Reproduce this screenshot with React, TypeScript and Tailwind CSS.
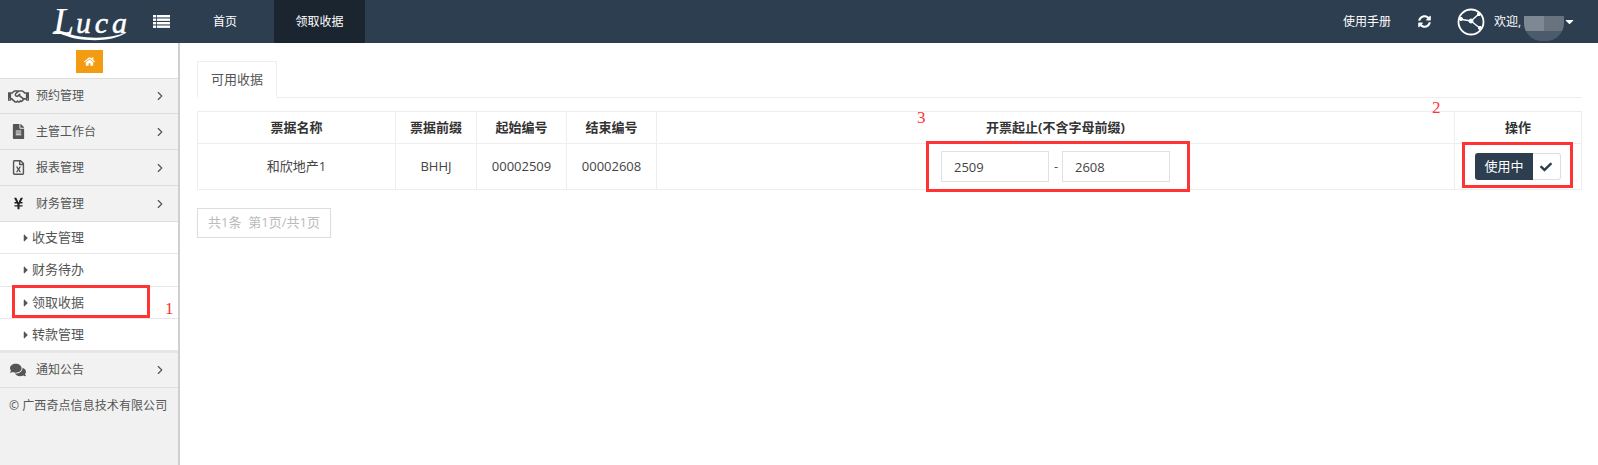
import { FaCaretDown, FaCaretRight, FaCheck, FaComments, FaFileAlt, FaHome, FaRegFileExcel, FaRegHandshake, FaSyncAlt, FaYenSign } from "react-icons/fa";
import { LuChevronRight } from "react-icons/lu";
import type { ReactNode } from "react";

const font = { fontFamily: '"Open Sans", "Noto Sans CJK SC", sans-serif' };

function MenuRow({ icon, label, h = "h-[35px]" }: { icon: ReactNode; label: string; h?: string }) {
  return (
    <div className={`flex ${h} items-center border-b border-[#dedede] bg-[#f2f2f2] pr-[11px] text-[12px] text-[#555]`}>
      <span className="flex w-[36px] shrink-0 justify-center text-[#555]">{icon}</span>
      <span className="flex-1">{label}</span>
      <LuChevronRight className="text-[14px]" />
    </div>
  );
}

function SubRow({ label, h = "h-[32px]" }: { label: string; h?: string }) {
  return (
    <div className={`flex ${h} items-center border-b border-[#e6e6e6] bg-white pl-[20px] text-[13px] text-[#555]`}>
      <FaCaretRight className="text-[12px] text-[#555]" />
      {label}
    </div>
  );
}

function Logo() {
  return (
    <svg width="80" height="43" viewBox="0 0 80 43">
      <text x="2" y="34" fill="#fff" fontFamily='"Liberation Serif", serif' fontStyle="italic" fontSize="38">L</text>
      <text x="25" y="33" fill="#fff" stroke="#fff" strokeWidth="0.5" fontFamily='"Liberation Serif", serif' fontStyle="italic" fontSize="30" textLength="51">uca</text>
      <path d="M1 33 C8 27 14 34 26 36 C44 39 62 38 76 32 C62 42 40 41 24 38.5 C14 36.5 8 32 1 33Z" fill="#fff" />
    </svg>
  );
}

function ListIcon() {
  return (
    <svg width="17" height="13" viewBox="0 0 17 13" fill="#fff">
      <rect x="0" y="0" width="17" height="2.4" />
      <rect x="0" y="3.5" width="17" height="2.4" />
      <rect x="0" y="7" width="17" height="2.4" />
      <rect x="0" y="10.5" width="17" height="2.4" />
      <rect x="3" y="0" width="0.8" height="13" fill="#2c3e50" />
    </svg>
  );
}

function Hub() {
  return (
    <svg width="28" height="28" viewBox="0 0 28 28" fill="none" stroke="#fff">
      <circle cx="14" cy="14" r="12.5" strokeWidth="1.8" />
      <path d="M2 11 L14 13 L23 5 M14 13 L24 21" strokeWidth="1.4" />
      <circle cx="14" cy="13" r="2" fill="#fff" />
      <circle cx="4" cy="11" r="1.6" fill="#fff" />
      <circle cx="22" cy="6" r="1.6" fill="#fff" />
      <circle cx="23" cy="20" r="1.6" fill="#fff" />
    </svg>
  );
}

const th = "border border-[#eee] font-bold text-[13px] text-[#333] text-center";
const td = "border border-[#eee] font-normal text-[13px] text-[#444] text-center";

export default function App() {
  return (
    <div className="relative flex h-[465px] w-[1598px] flex-col overflow-hidden bg-white" style={font}>
      <header className="flex h-[43px] shrink-0 items-center bg-[#2c3e50] text-[12px] text-white">
        <div className="ml-[51px] w-[102px]"><Logo /></div>
        <ListIcon />
        <span className="ml-[43px] w-[61px]">首页</span>
        <span className="flex h-full w-[91px] items-center justify-center bg-[#1b2530]">领取收据</span>
        <div className="ml-auto flex items-center pr-[22px]">
          <span>使用手册</span>
          <FaSyncAlt className="ml-[27px] text-[13px]" />
          <span className="ml-[26px]"><Hub /></span>
          <span className="ml-[9px]">欢迎,</span>
          <span className="relative top-[7px] ml-[3px] flex h-[25px] w-[40px] flex-col overflow-hidden rounded-b-[18px]">
            <span className="flex h-[15px]">
              <span className="w-[20px] bg-[#7d8893]" />
              <span className="w-[20px] bg-[#69737f]" />
            </span>
            <span className="h-[10px] bg-[#4b5b6c]" />
          </span>
          <FaCaretDown className="-ml-[1px] text-[13px]" />
        </div>
      </header>

      <div className="flex flex-1">
        <aside className="w-[180px] shrink-0 border-r-2 border-[#cfcfcf] bg-[#f1f1f1]">
          <div className="flex h-[36px] items-center justify-center border-b border-[#dedede] bg-white pt-[1px]">
            <span className="flex h-[23px] w-[27px] items-center justify-center bg-[#f39c12] text-[11px] text-white"><FaHome /></span>
          </div>
          <MenuRow icon={<FaRegHandshake className="text-[21px]" />} label="预约管理" />
          <MenuRow icon={<FaFileAlt className="text-[15px]" />} label="主管工作台" h="h-[36px]" />
          <MenuRow icon={<FaRegFileExcel className="text-[15px]" />} label="报表管理" h="h-[36px]" />
          <MenuRow icon={<FaYenSign className="text-[13px] text-[#222]" />} label="财务管理" h="h-[36px]" />
          <SubRow label="收支管理" />
          <SubRow label="财务待办" h="h-[33px]" />
          <SubRow label="领取收据" />
          <SubRow label="转款管理" />
          <div className="h-[2px] bg-[#e6e6e6]" />
          <MenuRow icon={<FaComments className="text-[16px]" />} label="通知公告" />
          <div className="pl-[9px] pt-[9px] text-[12px] tracking-[0.08px] text-[#555]">© 广西奇点信息技术有限公司</div>
        </aside>

        <main className="flex-1 pl-[17px] pr-[17px] pt-[18px]">
          <div className="flex h-[37px] border-b border-[#eee]">
            <div className="-mb-px flex w-[80px] items-center justify-center border border-b-white border-[#eee] bg-white text-[13px] text-[#555]">可用收据</div>
          </div>
          <table className="mt-[13px] w-[1384px] table-fixed border-collapse">
            <colgroup>
              <col className="w-[198px]" />
              <col className="w-[81px]" />
              <col className="w-[90px]" />
              <col className="w-[90px]" />
              <col className="w-[798px]" />
              <col className="w-[127px]" />
            </colgroup>
            <thead>
              <tr className="h-[32px]">
                <th className={th}>票据名称</th>
                <th className={th}>票据前缀</th>
                <th className={th}>起始编号</th>
                <th className={th}>结束编号</th>
                <th className={th}>开票起止(不含字母前缀)</th>
                <th className={th}>操作</th>
              </tr>
            </thead>
            <tbody>
              <tr className="h-[46px]">
                <td className={td}>和欣地产1</td>
                <td className={td}>BHHJ</td>
                <td className={td}>00002509</td>
                <td className={td}>00002608</td>
                <td className={td}>
                  <div className="flex items-center justify-center gap-[5px]">
                    <input readOnly value="2509" className="h-[31px] w-[108px] border border-[#dbe2e8] pl-[12px] text-[13px] text-[#444] outline-none" />
                    <span className="w-[3px] text-[#555]">-</span>
                    <input readOnly value="2608" className="h-[31px] w-[108px] border border-[#dbe2e8] pl-[12px] text-[13px] text-[#444] outline-none" />
                  </div>
                </td>
                <td className={td}>
                  <div className="flex justify-center">
                    <span className="flex h-[27px] items-center rounded-l-[3px] bg-[#2c3e50] px-[9px] text-white">使用中</span>
                    <span className="flex h-[27px] w-[28px] items-center justify-center rounded-r-[3px] border border-l-0 border-[#ddd] text-[12px] text-[#2c3e50]"><FaCheck /></span>
                  </div>
                </td>
              </tr>
            </tbody>
          </table>
          <div className="mt-[18px] flex h-[30px] w-[134px] items-center justify-center border border-[#ddd] text-[13px] text-[#bbb]">共1条&nbsp;&nbsp;第1页/共1页</div>
        </main>
      </div>

      {/* hand-drawn annotations over the page */}
      <div className="absolute left-[12px] top-[285px] h-[33px] w-[138px] border-[3px] border-[#ff3333]" />
      <div className="absolute left-[926px] top-[141px] h-[51px] w-[264px] border-[3px] border-[#ff3333]" />
      <div className="absolute left-[1462px] top-[142px] h-[46px] w-[111px] border-[3px] border-[#ff3333]" />
      <span className="absolute left-[165px] top-[296px] text-[17px] text-[#ff3333]" style={{ fontFamily: '"Liberation Serif", serif' }}>1</span>
      <span className="absolute left-[1432px] top-[95px] text-[17px] text-[#ff3333]" style={{ fontFamily: '"Liberation Serif", serif' }}>2</span>
      <span className="absolute left-[917px] top-[105px] text-[17px] text-[#ff3333]" style={{ fontFamily: '"Liberation Serif", serif' }}>3</span>
    </div>
  );
}
